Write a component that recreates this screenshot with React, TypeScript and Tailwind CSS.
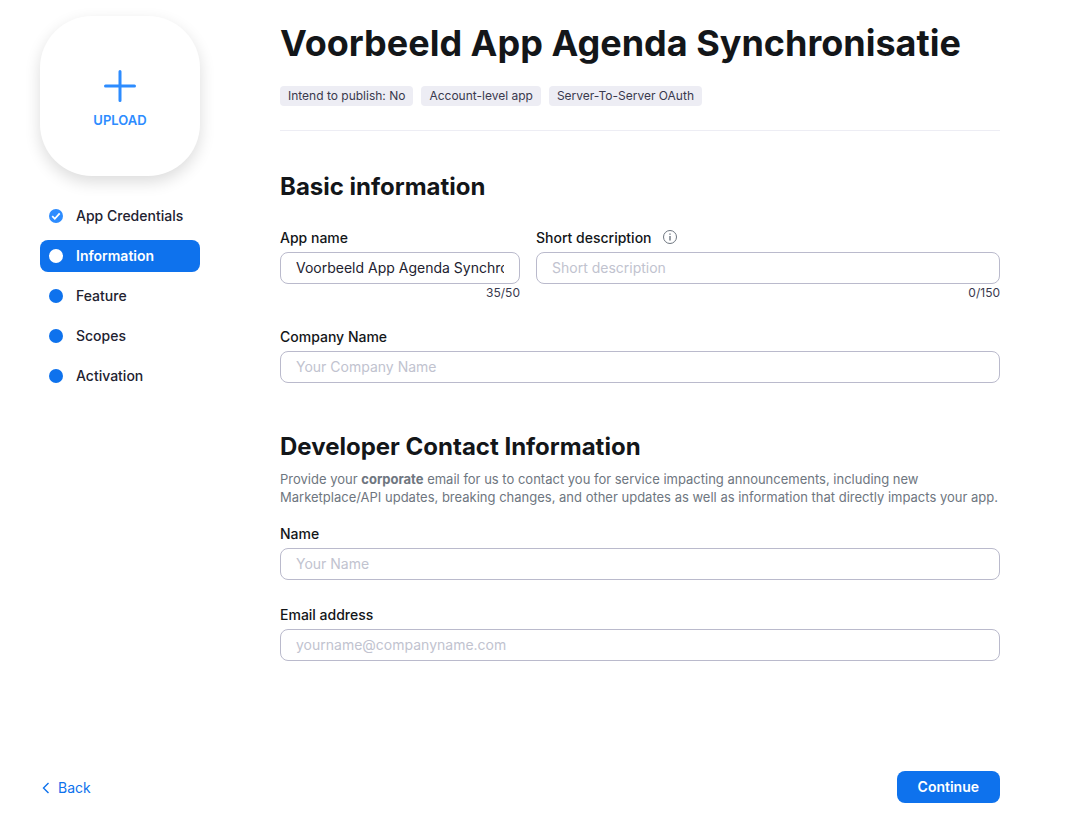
import React, { useState } from "react";

const steps = ["App Credentials", "Information", "Feature", "Scopes", "Activation"];

const tags = ["Intend to publish: No", "Account-level app", "Server-To-Server OAuth"];

const inputClass =
  "block w-full h-8 px-[15px] pb-px rounded-lg border border-[#babacc] bg-white text-sm text-[#222230] placeholder:text-[#c1c3cf] outline-none focus:border-[#0e72ed]";

const labelClass = "block text-sm leading-5 font-medium text-[#131619]";

export default function App() {
  const [appName, setAppName] = useState("Voorbeeld App Agenda Synchronisatie");
  const [description, setDescription] = useState("");
  const [company, setCompany] = useState("");
  const [name, setName] = useState("");
  const [email, setEmail] = useState("");
  const [active, setActive] = useState("Information");

  return (
    <main className="min-h-screen flex flex-col bg-white text-[#131619] font-['Inter',sans-serif] pl-10 pr-[89px] pt-4 pb-[18px]">
      <div className="flex gap-20">
        {/* Sidebar */}
        <aside className="w-40 shrink-0">
          <button
            type="button"
            className="w-40 h-40 pt-2 rounded-[52px] bg-white shadow-[0_6px_16px_rgba(0,0,0,0.14)] flex flex-col items-center justify-center gap-2 text-[#2d8cff]"
          >
            <svg width="32" height="32" viewBox="0 0 32 32" fill="none" stroke="currentColor" strokeWidth="3" strokeLinecap="round">
              <path d="M16 1.5v29M1.5 16h29" />
            </svg>
            <span className="text-[13px] leading-5 font-semibold">UPLOAD</span>
          </button>

          <nav className="mt-6 flex flex-col gap-2">
            {steps.map((step, i) => (
              <button
                key={step}
                type="button"
                onClick={() => setActive(step)}
                className={`h-8 px-[9px] rounded-lg flex items-center gap-[13px] text-sm text-left ${
                  step === active ? "bg-[#0e72ed] text-white font-semibold" : "font-medium text-[#222230]"
                }`}
              >
                <svg width="14" height="14" viewBox="0 0 14 14" fill="none">
                  <circle cx="7" cy="7" r="7" fill={step === active ? "#fff" : i === 0 ? "#2d8cff" : "#0e72ed"} />
                  {i === 0 && step !== active && (
                    <path d="M3.2 7.2l2.6 2.6 4.9-5.4" stroke="#fff" strokeWidth="1.8" />
                  )}
                </svg>
                {step}
              </button>
            ))}
          </nav>
        </aside>

        {/* Content */}
        <div className="flex-1 min-w-0">
          <header className="pb-6 border-b border-[#ededf4]">
            <h1 className="text-4xl leading-[54px] font-bold">Voorbeeld App Agenda Synchronisatie</h1>
            <div className="mt-4 flex gap-2">
              {tags.map((tag) => (
                <span key={tag} className="h-5 px-2 rounded bg-[#ededf4] text-xs leading-5 text-[#39394d]">
                  {tag}
                </span>
              ))}
            </div>
          </header>

          <section className="mt-10">
            <h2 className="text-2xl leading-8 font-bold">Basic information</h2>
            <div className="mt-[25px] flex gap-4">
              <div className="w-1/3 shrink-0">
                <label htmlFor="app-name" className={labelClass}>
                  App name
                </label>
                <input
                  id="app-name"
                  maxLength={50}
                  value={appName}
                  onChange={(e) => setAppName(e.target.value)}
                  className={`mt-1 ${inputClass}`}
                />
                <div className="text-xs leading-[18px] text-right text-[#39394d]">{appName.length}/50</div>
              </div>
              <div className="flex-1 min-w-0">
                <div className="flex items-center gap-2">
                  <label htmlFor="description" className={labelClass}>
                    Short description
                  </label>
                  <svg width="18" height="16" viewBox="0 0 18 16" fill="none" stroke="#6e7680">
                    <circle cx="10" cy="7" r="6.5" />
                    <path d="M10 6v4.5M10 3.5v1.3" strokeWidth="1.4" />
                  </svg>
                </div>
                <input
                  id="description"
                  maxLength={150}
                  placeholder="Short description"
                  value={description}
                  onChange={(e) => setDescription(e.target.value)}
                  className={`mt-1 ${inputClass}`}
                />
                <div className="text-xs leading-[18px] text-right text-[#39394d]">{description.length}/150</div>
              </div>
            </div>

            <label htmlFor="company" className={`mt-[25px] ${labelClass}`}>
              Company Name
            </label>
            <input
              id="company"
              placeholder="Your Company Name"
              value={company}
              onChange={(e) => setCompany(e.target.value)}
              className={`mt-1 ${inputClass}`}
            />
          </section>

          <section className="mt-12">
            <h2 className="text-2xl leading-8 font-bold">Developer Contact Information</h2>
            <p className="mt-[7px] text-[13px] leading-[18px] text-[#6e7680]">
              Provide your <b className="font-bold">corporate</b> email for us to contact you for service impacting
              announcements, including new Marketplace/API updates, breaking changes, and other updates as well as
              information that directly impacts your app.
            </p>

            <label htmlFor="name" className={`mt-[18px] ${labelClass}`}>
              Name
            </label>
            <input
              id="name"
              placeholder="Your Name"
              value={name}
              onChange={(e) => setName(e.target.value)}
              className={`mt-1 ${inputClass}`}
            />

            <label htmlFor="email" className={`mt-[25px] ${labelClass}`}>
              Email address
            </label>
            <input
              id="email"
              type="email"
              placeholder="yourname@companyname.com"
              value={email}
              onChange={(e) => setEmail(e.target.value)}
              className={`mt-1 ${inputClass}`}
            />
          </section>
        </div>
      </div>

      {/* Footer */}
      <footer className="mt-auto flex items-center justify-between">
        <a href="#back" className="flex items-center gap-2 pt-0.5 text-sm text-[#0e72ed]">
          <svg width="10" height="12" viewBox="0 0 10 12" fill="none" stroke="currentColor" strokeWidth="1.4">
            <path d="M8.5 1l-5 5 5 5" />
          </svg>
          Back
        </a>
        <button type="button" className="h-8 px-[21px] rounded-lg bg-[#0e72ed] text-white text-sm font-semibold">
          Continue
        </button>
      </footer>
    </main>
  );
}
